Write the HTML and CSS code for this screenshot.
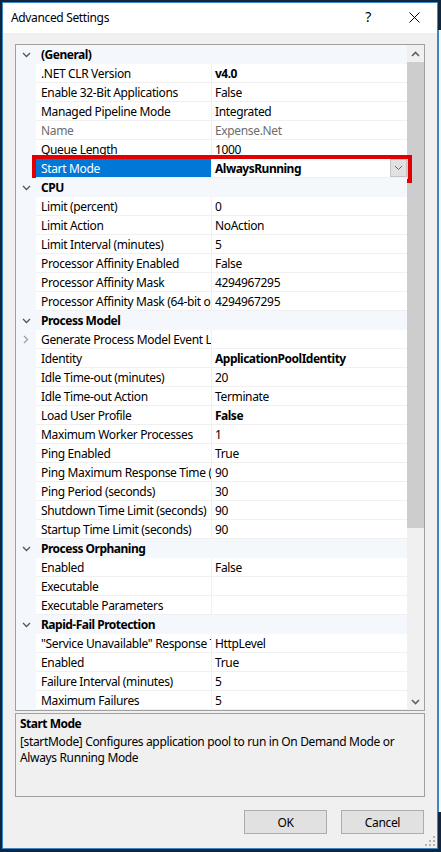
FILE: index.html
```html
<!DOCTYPE html>
<html>
<head>
<meta charset="utf-8">
<title>Advanced Settings</title>
<link rel="stylesheet" href="styles.css">
</head>
<body>
<div class="screen">
  <div class="window">
    <div class="titlebar">
      <span class="title">Advanced Settings</span>
      <span class="tb-btn help">?</span>
      <span class="tb-btn close"><svg width="11" height="11" viewBox="0 0 11 11"><path d="M0.5 0.5 L10.5 10.5 M10.5 0.5 L0.5 10.5" stroke="#000" stroke-width="1" fill="none"/></svg></span>
    </div>
    <div class="content">
      <div class="grid">
        <div class="rows">
          <div class="row cat"><span class="gut"><svg class="chev" width="9" height="6" viewBox="0 0 9 6"><path d="M1 1 L4.5 4.5 L8 1" stroke="#555" stroke-width="1.3" fill="none"/></svg></span><span class="cat-name">(General)</span></div>
          <div class="row"><span class="gut"></span><span class="name">.NET CLR Version</span><span class="val b">v4.0</span></div>
          <div class="row"><span class="gut"></span><span class="name">Enable 32-Bit Applications</span><span class="val">False</span></div>
          <div class="row"><span class="gut"></span><span class="name">Managed Pipeline Mode</span><span class="val">Integrated</span></div>
          <div class="row ro"><span class="gut"></span><span class="name">Name</span><span class="val">Expense.Net</span></div>
          <div class="row"><span class="gut"></span><span class="name">Queue Length</span><span class="val">1000</span></div>
          <div class="row sel"><span class="gut"></span><span class="name">Start Mode</span><span class="val b">AlwaysRunning<span class="dd"><svg width="9" height="6" viewBox="0 0 9 6"><path d="M1 1 L4.5 4.5 L8 1" stroke="#666" stroke-width="1" fill="none"/></svg></span></span><span class="mark"></span></div>
          <div class="row cat"><span class="gut"><svg class="chev" width="9" height="6" viewBox="0 0 9 6"><path d="M1 1 L4.5 4.5 L8 1" stroke="#555" stroke-width="1.3" fill="none"/></svg></span><span class="cat-name">CPU</span></div>
          <div class="row"><span class="gut"></span><span class="name">Limit (percent)</span><span class="val">0</span></div>
          <div class="row"><span class="gut"></span><span class="name">Limit Action</span><span class="val">NoAction</span></div>
          <div class="row"><span class="gut"></span><span class="name">Limit Interval (minutes)</span><span class="val">5</span></div>
          <div class="row"><span class="gut"></span><span class="name">Processor Affinity Enabled</span><span class="val">False</span></div>
          <div class="row"><span class="gut"></span><span class="name">Processor Affinity Mask</span><span class="val">4294967295</span></div>
          <div class="row"><span class="gut"></span><span class="name">Processor Affinity Mask (64-bit option)</span><span class="val">4294967295</span></div>
          <div class="row cat"><span class="gut"><svg class="chev" width="9" height="6" viewBox="0 0 9 6"><path d="M1 1 L4.5 4.5 L8 1" stroke="#555" stroke-width="1.3" fill="none"/></svg></span><span class="cat-name">Process Model</span></div>
          <div class="row"><span class="gut"><svg class="chev" width="6" height="9" viewBox="0 0 6 9"><path d="M1 1 L4.5 4.5 L1 8" stroke="#a0a0a0" stroke-width="1.3" fill="none"/></svg></span><span class="name">Generate Process Model Event Log Entry</span><span class="val"></span></div>
          <div class="row"><span class="gut"></span><span class="name">Identity</span><span class="val b">ApplicationPoolIdentity</span></div>
          <div class="row"><span class="gut"></span><span class="name">Idle Time-out (minutes)</span><span class="val">20</span></div>
          <div class="row"><span class="gut"></span><span class="name">Idle Time-out Action</span><span class="val">Terminate</span></div>
          <div class="row"><span class="gut"></span><span class="name">Load User Profile</span><span class="val b">False</span></div>
          <div class="row"><span class="gut"></span><span class="name">Maximum Worker Processes</span><span class="val">1</span></div>
          <div class="row"><span class="gut"></span><span class="name">Ping Enabled</span><span class="val">True</span></div>
          <div class="row"><span class="gut"></span><span class="name">Ping Maximum Response Time (seconds)</span><span class="val">90</span></div>
          <div class="row"><span class="gut"></span><span class="name">Ping Period (seconds)</span><span class="val">30</span></div>
          <div class="row"><span class="gut"></span><span class="name">Shutdown Time Limit (seconds)</span><span class="val">90</span></div>
          <div class="row"><span class="gut"></span><span class="name">Startup Time Limit (seconds)</span><span class="val">90</span></div>
          <div class="row cat"><span class="gut"><svg class="chev" width="9" height="6" viewBox="0 0 9 6"><path d="M1 1 L4.5 4.5 L8 1" stroke="#555" stroke-width="1.3" fill="none"/></svg></span><span class="cat-name">Process Orphaning</span></div>
          <div class="row"><span class="gut"></span><span class="name">Enabled</span><span class="val">False</span></div>
          <div class="row"><span class="gut"></span><span class="name">Executable</span><span class="val"></span></div>
          <div class="row"><span class="gut"></span><span class="name">Executable Parameters</span><span class="val"></span></div>
          <div class="row cat"><span class="gut"><svg class="chev" width="9" height="6" viewBox="0 0 9 6"><path d="M1 1 L4.5 4.5 L8 1" stroke="#555" stroke-width="1.3" fill="none"/></svg></span><span class="cat-name">Rapid-Fail Protection</span></div>
          <div class="row"><span class="gut"></span><span class="name">"Service Unavailable" Response Type</span><span class="val">HttpLevel</span></div>
          <div class="row"><span class="gut"></span><span class="name">Enabled</span><span class="val">True</span></div>
          <div class="row"><span class="gut"></span><span class="name">Failure Interval (minutes)</span><span class="val">5</span></div>
          <div class="row"><span class="gut"></span><span class="name">Maximum Failures</span><span class="val">5</span></div>
        </div>
        <div class="scrollbar">
          <span class="sb-arrow"><svg width="9" height="6" viewBox="0 0 9 6"><path d="M1 5 L4.5 1.5 L8 5" stroke="#606060" stroke-width="1.6" fill="none"/></svg></span>
          <span class="sb-track"><span class="sb-thumb"></span></span>
          <span class="sb-arrow"><svg width="9" height="6" viewBox="0 0 9 6"><path d="M1 1 L4.5 4.5 L8 1" stroke="#606060" stroke-width="1.6" fill="none"/></svg></span>
        </div>
      </div>
      <div class="desc">
        <div class="desc-title">Start Mode</div>
        <div class="desc-text">[startMode] Configures application pool to run in On Demand Mode or Always Running Mode</div>
      </div>
      <div class="actions">
        <span class="btn">OK</span>
        <span class="btn">Cancel</span>
      </div>
    </div>
    <svg class="grip" width="10" height="10" viewBox="0 0 10 10">
      <rect x="8" y="0" width="2" height="2" fill="#b4b4b4"/>
      <rect x="4" y="4" width="2" height="2" fill="#b4b4b4"/><rect x="8" y="4" width="2" height="2" fill="#b4b4b4"/>
      <rect x="0" y="8" width="2" height="2" fill="#b4b4b4"/><rect x="4" y="8" width="2" height="2" fill="#b4b4b4"/><rect x="8" y="8" width="2" height="2" fill="#b4b4b4"/>
    </svg>
  </div>
  <div class="backdrop">
    <div class="bd-top"></div>
    <div class="bd-app"></div>
  </div>
</div>
</body>
</html>
```
FILE: styles.css
```css
html, body {
  margin: 0;
  padding: 0;
}
body {
  width: 441px;
  height: 852px;
  overflow: hidden;
  background: #10263f;
  font-family: "Noto Sans", "Open Sans", sans-serif;
  font-size: 12px;
  letter-spacing: -0.35px;
  color: #000;
}
.screen {
  display: flex;
  padding: 2px 0 0 2px;
  height: 852px;
  box-sizing: border-box;
}
.window {
  position: relative;
  width: 436px;
  height: 847px;
  flex: none;
  box-sizing: border-box;
  border: 1px solid #3c86c6;
  background: #f0f0f0;
  display: flex;
  flex-direction: column;
}
.titlebar {
  height: 30px;
  background: #fff;
  display: flex;
  align-items: center;
  padding-left: 8px;
  flex: none;
}
.title {
  flex: 1;
  font-size: 12px;
  margin-top: -2px;
}
.tb-btn {
  width: 46px;
  height: 30px;
  display: flex;
  align-items: center;
  justify-content: center;
}
.help {
  font-size: 14px;
  margin-top: -3px;
}
.close {
  margin-top: -1px;
}
.content {
  padding: 11px 0 0 12px;
  display: flex;
  flex-direction: column;
}
.grid {
  width: 410px;
  height: 667px;
  box-sizing: border-box;
  border: 1px solid #a0a0a0;
  background: #fff;
  display: flex;
}
.rows {
  width: 391px;
  display: flex;
  flex-direction: column;
  position: relative;
  z-index: 2;
}
.row {
  height: 19px;
  display: flex;
  position: relative;
  line-height: 20px;
  white-space: nowrap;
}
.gut {
  width: 20px;
  flex: none;
  background: #f4f7fc;
  display: flex;
  align-items: center;
  justify-content: center;
}
.name {
  width: 176px;
  flex: none;
  padding-left: 5px;
  box-sizing: border-box;
  overflow: hidden;
  border-bottom: 1px solid #f0f0f0;
  border-right: 1px solid #f0f0f0;
  height: 19px;
}
.val {
  flex: 1;
  padding-left: 3px;
  border-bottom: 1px solid #f0f0f0;
  height: 18px;
  display: flex;
  overflow: hidden;
}
.b {
  font-weight: bold;
  letter-spacing: -0.5px;
}
.ro .name, .ro .val {
  color: #6d6d6d;
}
.cat {
  background: #f4f7fc;
}
.cat-name {
  font-weight: bold;
  letter-spacing: -0.5px;
  padding-left: 5px;
}
.sel .name {
  background: #0078d7;
  color: #fff;
}
.dd {
  margin-left: auto;
  width: 17px;
  height: 18px;
  box-sizing: border-box;
  background: #e1e1e1;
  border: 1px solid #c6c6c6;
  display: flex;
  align-items: center;
  justify-content: center;
}
.mark {
  position: absolute;
  left: 16px;
  top: -4px;
  width: 380px;
  height: 28px;
  box-sizing: border-box;
  border: 4px solid #e30000;
}
.scrollbar {
  width: 17px;
  background: #f0f0f0;
  display: flex;
  flex-direction: column;
}
.sb-arrow {
  height: 17px;
  display: flex;
  align-items: center;
  justify-content: center;
  flex: none;
}
.sb-track {
  flex: 1;
  display: flex;
  flex-direction: column;
}
.sb-thumb {
  height: 466px;
  background: #cdcdcd;
}
.desc {
  margin-top: 2px;
  width: 410px;
  height: 84px;
  box-sizing: border-box;
  border: 1px solid #a0a0a0;
  padding: 2px 4px;
  line-height: 16px;
}
.desc-title {
  font-weight: bold;
  letter-spacing: -0.5px;
  margin-bottom: 2px;
}
.actions {
  width: 410px;
  display: flex;
  justify-content: flex-end;
  gap: 14px;
  margin-top: 13px;
  padding-right: 1px;
  box-sizing: border-box;
}
.btn {
  width: 83px;
  height: 24px;
  box-sizing: border-box;
  background: #e1e1e1;
  border: 1px solid #adadad;
  display: flex;
  align-items: center;
  justify-content: center;
}
.grip {
  position: absolute;
  right: 2px;
  bottom: 2px;
}
.backdrop {
  flex: 1;
  display: flex;
  flex-direction: column;
}
.bd-top {
  height: 28px;
}
.bd-app {
  height: 782px;
  background: #f7f7f7;
  border-left: 1px solid #3c86c6;
}
```
